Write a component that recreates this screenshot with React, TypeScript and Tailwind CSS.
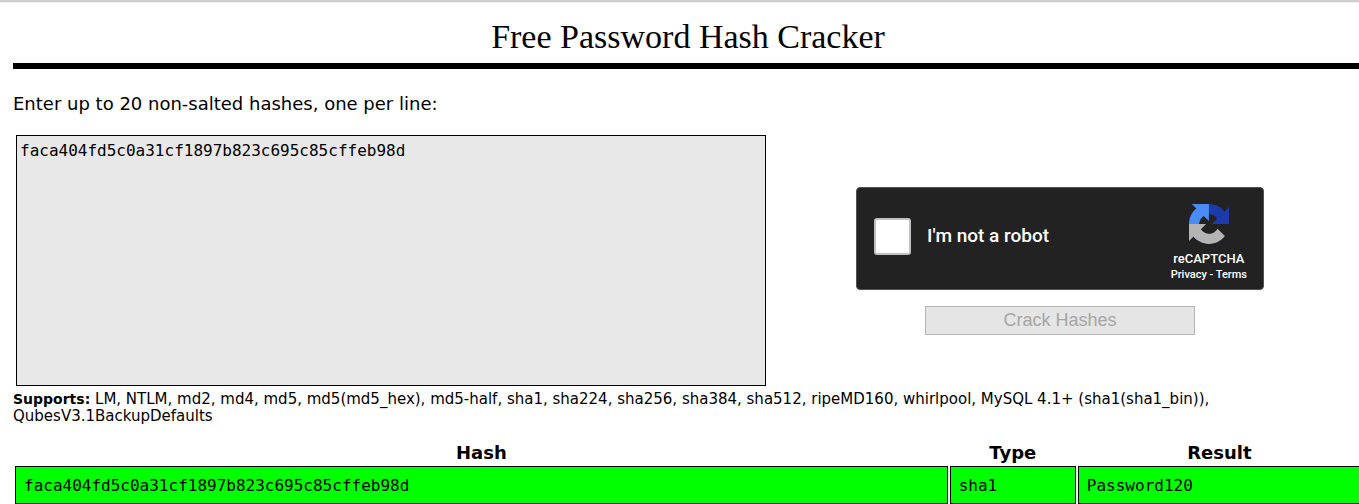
import { useState } from "react";

const results = [
  {
    hash: "faca404fd5c0a31cf1897b823c695c85cffeb98d",
    type: "sha1",
    result: "Password120",
  },
];

function RecaptchaLogo() {
  return (
    <svg viewBox="0 0 64 64" className="size-10" aria-hidden="true">
      <path
        fill="#1c3aa9"
        d="M64 31.955l-.033-1.37V4.687l-7.16 7.16C50.948 4.674 42.033.093 32.05.093c-10.4 0-19.622 4.96-25.458 12.64l11.736 11.86a15.55 15.55 0 0 1 4.754-5.334c2.05-1.6 4.952-2.906 8.968-2.906.485 0 .86.057 1.135.163 4.976.393 9.288 3.14 11.828 7.124l-8.307 8.307L64 31.953"
      />
      <path
        fill="#4a8cf6"
        d="M31.862.094l-1.37.033H4.594l7.16 7.16C4.58 13.147 0 22.06 0 32.046c0 10.4 4.96 19.622 12.64 25.458L24.5 45.768a15.55 15.55 0 0 1-5.334-4.754c-1.6-2.05-2.906-4.952-2.906-8.968 0-.485.057-.86.163-1.135.393-4.976 3.14-9.288 7.124-11.828l8.307 8.307L31.86.095"
      />
      <path
        fill="#b4b4b4"
        d="M.001 32.045l.033 1.37v25.898l7.16-7.16c5.86 7.173 14.774 11.754 24.76 11.754 10.4 0 19.622-4.96 25.458-12.64l-11.736-11.86a15.55 15.55 0 0 1-4.754 5.334c-2.05 1.6-4.952 2.906-8.968 2.906-.485 0-.86-.057-1.135-.163-4.976-.393-9.288-3.14-11.828-7.124l8.307-8.307c-10.522.04-22.4.066-27.295-.005"
      />
    </svg>
  );
}

function Captcha() {
  return (
    <div className="flex w-[408px] items-center justify-between rounded-[4px] border border-[#525252] bg-[#222222] pt-4 pr-4 pb-2 pl-[17px] font-['Roboto',sans-serif] font-medium text-white">
      <label className="-mt-3 flex items-center gap-4 text-[19px] leading-6">
        <input
          type="checkbox"
          className="size-[37px] appearance-none rounded-[3px] border-2 border-[#c1c1c1] bg-white checked:bg-[#4a8cf6]"
        />
        I'm not a robot
      </label>
      <div className="flex flex-col items-center">
        <RecaptchaLogo />
        <span className="pt-[5px] text-[13px] leading-5">reCAPTCHA</span>
        <span className="text-[11px] leading-3">
          <a href="#privacy">Privacy</a> - <a href="#terms">Terms</a>
        </span>
      </div>
    </div>
  );
}

export default function App() {
  const [hashes, setHashes] = useState(results[0].hash);
  return (
    <div className="overflow-hidden border-t-2 border-[#d0d0d0] bg-white font-['DejaVu_Sans',sans-serif] text-black shadow-[inset_0_1px_0_#f0f0f0]">
      <main className="-mr-1 pl-[13px]">
        <h1 className="border-b-6 border-black pt-3.5 pb-1.5 text-center font-['Liberation_Serif',serif] text-[34px] leading-[41px]">
          Free Password Hash Cracker
        </h1>
        <form onSubmit={(e) => e.preventDefault()}>
          <label htmlFor="hashes" className="block pt-6 text-[18px] leading-[22px]">
            Enter up to 20 non-salted hashes, one per line:
          </label>
          <div className="flex items-center pt-5 pl-[3px]">
            <textarea
              id="hashes"
              spellCheck={false}
              value={hashes}
              onChange={(e) => setHashes(e.target.value)}
              className="block h-[251px] w-[750px] resize-none border border-black bg-[#e8e8e8] px-[3px] py-1 font-['DejaVu_Sans_Mono',monospace] text-[16px] leading-[22px] outline-none"
            />
            <div className="flex flex-1 flex-col items-center gap-4 pr-[9px]">
              <Captcha />
              <button
                type="submit"
                disabled
                className="h-[29px] w-[270px] border border-[#b5b5b5] bg-[#e5e5e5] font-['Liberation_Sans',sans-serif] text-[18px] leading-6 text-[#a6a6a6]"
              >
                Crack Hashes
              </button>
            </div>
          </div>
        </form>
        <p className="pt-[5px] pr-36 text-[15px] leading-[17px]">
          <strong className="text-[14px]">Supports:</strong> LM, NTLM, md2, md4, md5, md5(md5_hex),
          md5-half, sha1, sha224, sha256, sha384, sha512, ripeMD160, whirlpool, MySQL 4.1+
          (sha1(sha1_bin)), QubesV3.1BackupDefaults
        </p>
        <table className="mt-[15px] w-full table-fixed border-separate border-spacing-[2px]">
          <thead>
            <tr className="text-[18px] leading-[22px]">
              <th className="w-[69.5%]">Hash</th>
              <th className="w-[9.4%]">Type</th>
              <th>Result</th>
            </tr>
          </thead>
          <tbody className="font-['DejaVu_Sans_Mono',monospace] text-[16px] leading-[22px]">
            {results.map((r) => (
              <tr key={r.hash}>
                <td className="border border-black bg-[#00ff00] px-2 pt-2 pb-1.5">{r.hash}</td>
                <td className="border border-black bg-[#00ff00] px-2 pt-2 pb-1.5">{r.type}</td>
                <td className="border border-black bg-[#00ff00] px-2 pt-2 pb-1.5">{r.result}</td>
              </tr>
            ))}
          </tbody>
        </table>
      </main>
    </div>
  );
}
